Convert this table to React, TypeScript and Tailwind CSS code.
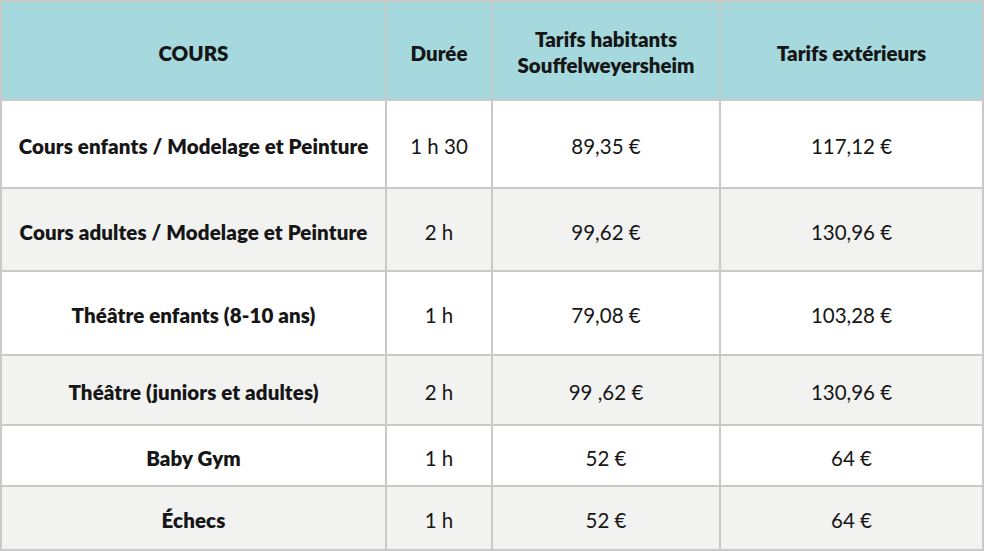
import React from "react";

type Row = { name: string; dur: string; hab: string; ext: string; h: string; alt: boolean };

const rows: Row[] = [
  { name: "Cours enfants / Modelage et Peinture", dur: "1 h 30", hab: "89,35 €", ext: "117,12 €", h: "h-[86px]", alt: false },
  { name: "Cours adultes / Modelage et Peinture", dur: "2 h", hab: "99,62 €", ext: "130,96 €", h: "h-[81px]", alt: true },
  { name: "Théâtre enfants (8-10 ans)", dur: "1 h", hab: "79,08 €", ext: "103,28 €", h: "h-[82px]", alt: false },
  { name: "Théâtre (juniors et adultes)", dur: "2 h", hab: "99 ,62 €", ext: "130,96 €", h: "h-[68px]", alt: true },
  { name: "Baby Gym", dur: "1 h", hab: "52 €", ext: "64 €", h: "h-[59px]", alt: false },
  { name: "Échecs", dur: "1 h", hab: "52 €", ext: "64 €", h: "h-[62px]", alt: true },
];

export default function App() {
  return (
    <div
      className="w-[984px] h-[551px] bg-[#c9c9c9] p-[2px] grid grid-cols-[383px_104px_226px_261px] gap-[2px] text-[#161616]"
      style={{ fontFamily: "Lato, 'Noto Sans', sans-serif" }}
    >
      <div className="h-[97px] bg-[#a5d9de] flex items-center justify-center font-extrabold text-[20.5px] pt-[6px]">COURS</div>
      <div className="h-[97px] bg-[#a5d9de] flex items-center justify-center font-extrabold text-[20.5px] pt-[6px]">Durée</div>
      <div className="h-[97px] bg-[#a5d9de] flex items-center justify-center text-center font-extrabold text-[20.5px] leading-[26px] pt-[2px]">
        Tarifs habitants<br />Souffelweyersheim
      </div>
      <div className="h-[97px] bg-[#a5d9de] flex items-center justify-center font-extrabold text-[20.5px] pt-[6px]">Tarifs extérieurs</div>
      {rows.map((r, i) => {
        const bg = r.alt ? "bg-[#f2f2f1]" : "bg-white";
        return (
          <React.Fragment key={i}>
            <div className={`${r.h} ${bg} flex items-center justify-center font-extrabold text-[20.5px] pt-[5px] tracking-[0.1px]`}>{r.name}</div>
            <div className={`${r.h} ${bg} flex items-center justify-center text-[20.5px] pt-[5px]`}>{r.dur}</div>
            <div className={`${r.h} ${bg} flex items-center justify-center text-[20.5px] pt-[5px]`}>{r.hab}</div>
            <div className={`${r.h} ${bg} flex items-center justify-center text-[20.5px] pt-[5px]`}>{r.ext}</div>
          </React.Fragment>
        );
      })}
    </div>
  );
}
